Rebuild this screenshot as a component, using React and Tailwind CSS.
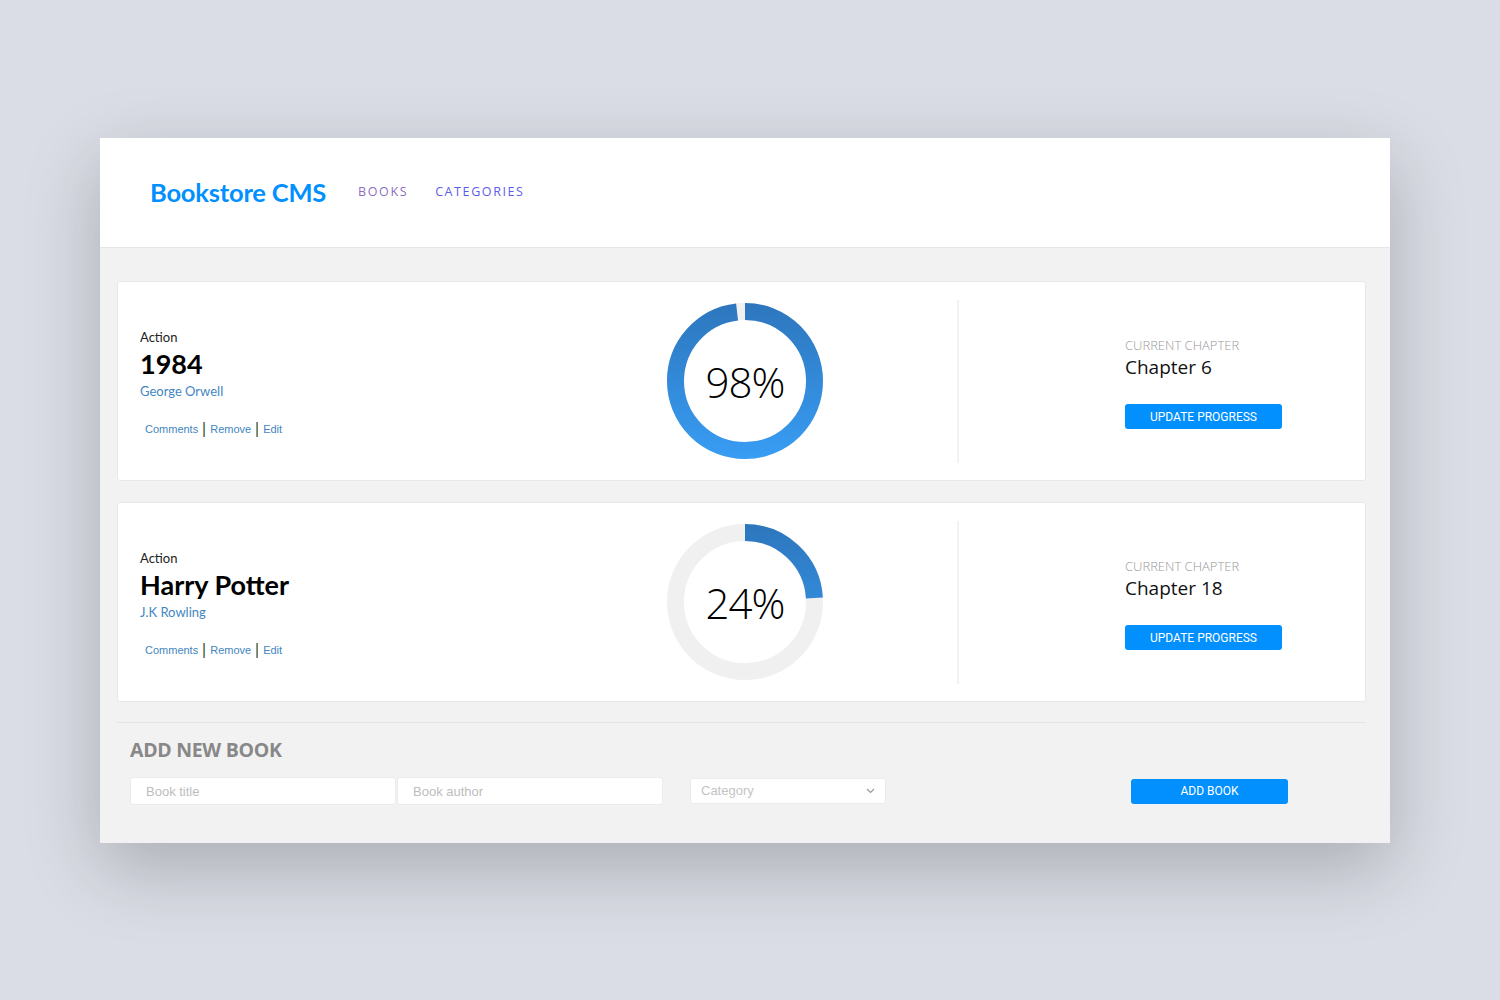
import React from "react";

const books = [
    { id: 1, category: "Action", title: "1984", author: "George Orwell", percent: 98, chapter: "Chapter 6" },
    { id: 2, category: "Action", title: "Harry Potter", author: "J.K Rowling", percent: 24, chapter: "Chapter 18" },
];

const Pipe = () => (
    <span className="inline-block w-[2px] h-[15px] mx-[5px] border-l border-l-[#c98a3c] border-r border-r-[#3b8db5]" />
);

const ProgressRing = ({ percent, id }) => {
    const r = 69.5;
    const c = 2 * Math.PI * r;
    const dash = (c * percent) / 100;
    // gradient coords are in the rotated space, so top->bottom on screen is x 156->0
    return (
        <div className="relative w-[156px] h-[156px]">
            <svg width="156" height="156" viewBox="0 0 156 156">
                <defs>
                    <linearGradient id={`ring-${id}`} x1="156" y1="78" x2="0" y2="78" gradientUnits="userSpaceOnUse">
                        <stop offset="0" stopColor="#2d76bd" />
                        <stop offset="1" stopColor="#389df4" />
                    </linearGradient>
                </defs>
                <circle cx="78" cy="78" r={r} fill="none" stroke="#f0f0f0" strokeWidth="17" />
                <circle
                    cx="78"
                    cy="78"
                    r={r}
                    fill="none"
                    stroke={`url(#ring-${id})`}
                    strokeWidth="17"
                    strokeDasharray={`${dash} ${c}`}
                    transform="rotate(-90 78 78)"
                />
            </svg>
            <div className="absolute inset-0 flex items-center justify-center text-[42px] font-light text-black font-['Open_Sans',sans-serif] tracking-[-1px]">
                {percent}%
            </div>
        </div>
    );
};

const BookCard = ({ book }) => (
    <div className="flex items-center h-[200px] bg-white border border-[#e8e8e8] rounded-[3px] pl-[22px]">
        <div className="w-[527px] flex flex-col font-['Lato',sans-serif] pt-[4px]">
            <span className="text-[13px] text-[#222] leading-[16px]">{book.category}</span>
            <span className="text-[27px] font-bold text-black leading-[30px] mt-[4px]">{book.title}</span>
            <span className="text-[13px] text-[#4386bf] leading-[16px] mt-[4px]">{book.author}</span>
            <div className="flex items-center mt-[22px] ml-[5px] text-[11px] text-[#4386bf] font-['Liberation_Sans',sans-serif]">
                <span>Comments</span>
                <Pipe />
                <span>Remove</span>
                <Pipe />
                <span>Edit</span>
            </div>
        </div>
        <ProgressRing percent={book.percent} id={book.id} />
        <div className="ml-[134px] w-[2px] h-[163px] bg-[#f2f2f2]" />
        <div className="pl-[166px] pt-[4px] flex flex-col font-['Open_Sans',sans-serif]">
            <span className="text-[13px] uppercase text-[#9a9a9a] font-light leading-[16px]">Current Chapter</span>
            <span className="text-[19px] text-[#121212] leading-[26px] mt-[1px]">{book.chapter}</span>
            <button className="mt-[24px] w-[157px] h-[25px] rounded-[3px] bg-[#0290ff] text-white text-[12px] uppercase font-['Roboto',sans-serif]">
                Update Progress
            </button>
        </div>
    </div>
);

export default function App() {
    return (
        <div className="min-h-screen w-full bg-[#dadde5] pt-[138px] pl-[100px] pb-[156px]">
            <div className="w-[1290px] bg-[#f2f2f2] shadow-[0_25px_70px_rgba(0,0,0,0.22)]">
                <header className="h-[110px] bg-white border-b border-[#e6e6e6] flex items-center pl-[50px]">
                    <span className="text-[25.5px] font-bold text-[#0290ff] font-['Lato',sans-serif] tracking-[-0.2px]">
                        Bookstore CMS
                    </span>
                    <nav className="flex gap-[27px] ml-[32px] text-[12.5px] tracking-[1.6px] font-['Open_Sans',sans-serif]">
                        <span className="text-[#8b6fbf]">BOOKS</span>
                        <span className="text-[#5c5cea]">CATEGORIES</span>
                    </nav>
                </header>
                <main className="pt-[33px] pl-[17px] pr-[24px] pb-[38px]">
                    <div className="flex flex-col gap-[21px]">
                        {books.map((b) => (
                            <BookCard key={b.id} book={b} />
                        ))}
                    </div>
                    <div className="mt-[20px] border-t border-[#e4e4e4] pt-[14px] pl-[13px]">
                        <h2 className="text-[19.5px] font-bold text-[#888] font-['Open_Sans',sans-serif] leading-[26px] tracking-[-0.3px]">
                            ADD NEW BOOK
                        </h2>
                        <div className="flex items-center mt-[14px] font-['Liberation_Sans',sans-serif] text-[13px]">
                            <input
                                placeholder="Book title"
                                className="w-[266px] h-[28px] bg-white border border-[#ececec] rounded-[3px] px-[15px] placeholder:text-[#bdbdbd] outline-none"
                            />
                            <input
                                placeholder="Book author"
                                className="w-[266px] h-[28px] ml-[1px] bg-white border border-[#ececec] rounded-[3px] px-[15px] placeholder:text-[#bdbdbd] outline-none"
                            />
                            <div className="ml-[27px] w-[196px] h-[26px] bg-white border border-[#ececec] rounded-[3px] flex items-center justify-between px-[10px] text-[#c4c4c4]">
                                <span>Category</span>
                                <svg width="9" height="6" viewBox="0 0 9 6" fill="none">
                                    <path d="M1 1l3.5 3.5L8 1" stroke="#9a9a9a" strokeWidth="1.2" />
                                </svg>
                            </div>
                            <button className="ml-[245px] w-[157px] h-[25px] rounded-[3px] bg-[#0290ff] text-white text-[12px] font-['Roboto',sans-serif]">
                                ADD BOOK
                            </button>
                        </div>
                    </div>
                </main>
            </div>
        </div>
    );
}
